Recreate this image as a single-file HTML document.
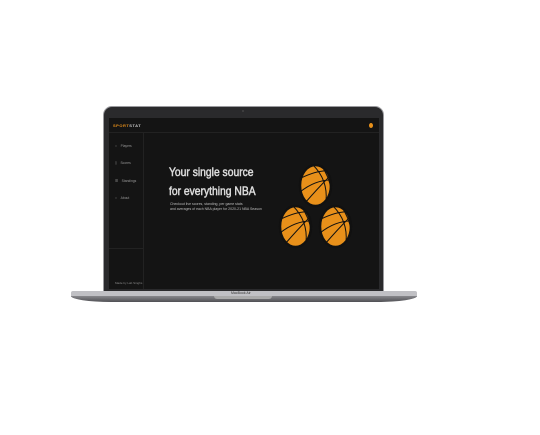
<!DOCTYPE html>
<html><head><style>
body{margin:0;width:540px;height:435px;background:#fff;position:relative;overflow:hidden;font-family:"Liberation Sans",sans-serif}
.a{position:absolute}
</style></head><body>
<div class="a" style="left:103px;top:106px;width:281px;height:188px;background:#2a2a2c;border-radius:9px 9px 0 0;border:1px solid #9a9a9e;box-sizing:border-box"></div>
<div class="a" style="left:242px;top:110px;width:2px;height:2px;background:#444;border-radius:50%"></div>
<div class="a" style="left:109px;top:118px;width:270px;height:171px;background:#141414"></div>
<div class="a" style="left:109px;top:132px;width:270px;height:1px;background:#222"></div>
<div class="a" style="left:143px;top:133px;width:1px;height:156px;background:#222"></div>
<div class="a" style="left:109px;top:248px;width:34px;height:1px;background:#222"></div>
<div class="a" style="left:113px;top:123px;font-size:4px;font-weight:bold;color:#ccc;letter-spacing:.5px"><span style="color:#e8901a">SPORT</span>STAT</div>
<div class="a" style="left:369px;top:123px;width:4px;height:5px;background:#e8901a;border-radius:50%"></div>
<div class="a" style="left:115px;top:138px;font-size:3.3px;color:#999;line-height:17.3px">○&nbsp;&nbsp;&nbsp;&nbsp;Players<br>▯&nbsp;&nbsp;&nbsp;&nbsp;Scores<br>☰&nbsp;&nbsp;&nbsp;&nbsp;Standings<br>○&nbsp;&nbsp;&nbsp;&nbsp;About</div>
<div class="a" style="left:115px;top:281px;font-size:3px;color:#888">Made by Lab Singhs</div>
<div class="a" style="left:169px;top:163px;font-size:12px;color:#ddd;line-height:19px;transform:scaleX(0.86);transform-origin:0 0;white-space:nowrap;-webkit-text-stroke:0.5px #ddd">Your single source<br>for everything NBA</div>
<div class="a" style="left:170px;top:202px;font-size:3.5px;color:#bbb;line-height:5px">Checkout live scores, standing, per game stats<br>and averages of each NBA player for 2020-21 NBA Season</div>
<svg class="a" style="left:270px;top:155px" width="90" height="100" viewBox="270 155 90 100">
<g stroke="#111" stroke-width="1" fill="none">
<g id="b"><ellipse cx="315.5" cy="185.5" rx="15.5" ry="20.5" fill="#e8901a" stroke-width="2.5"/>
<path d="M301 178 Q318 170 328 171 M300 192 Q315 180 331 180 M305 203 Q318 188 330 176 M313 165 Q328 180 326 201 M323 168 Q333 185 330 195"/></g>
<use href="#b" x="-20" y="41"/><use href="#b" x="20" y="41"/>
</g></svg>
<div class="a" style="left:71px;top:291px;width:346px;height:6px;background:#c0c0c4;border-radius:2px 2px 0 0"></div>
<div class="a" style="left:71px;top:296px;width:346px;height:6px;background:linear-gradient(#88888c,#505054);border-radius:0 0 40px 40px/0 0 6px 6px"></div>
<div class="a" style="left:214px;top:296px;width:58px;height:3px;background:#aaa;border-radius:0 0 3px 3px"></div>
<div class="a" style="left:231px;top:291px;font-size:3.5px;color:#333">MacBook Air</div>
</body></html>
